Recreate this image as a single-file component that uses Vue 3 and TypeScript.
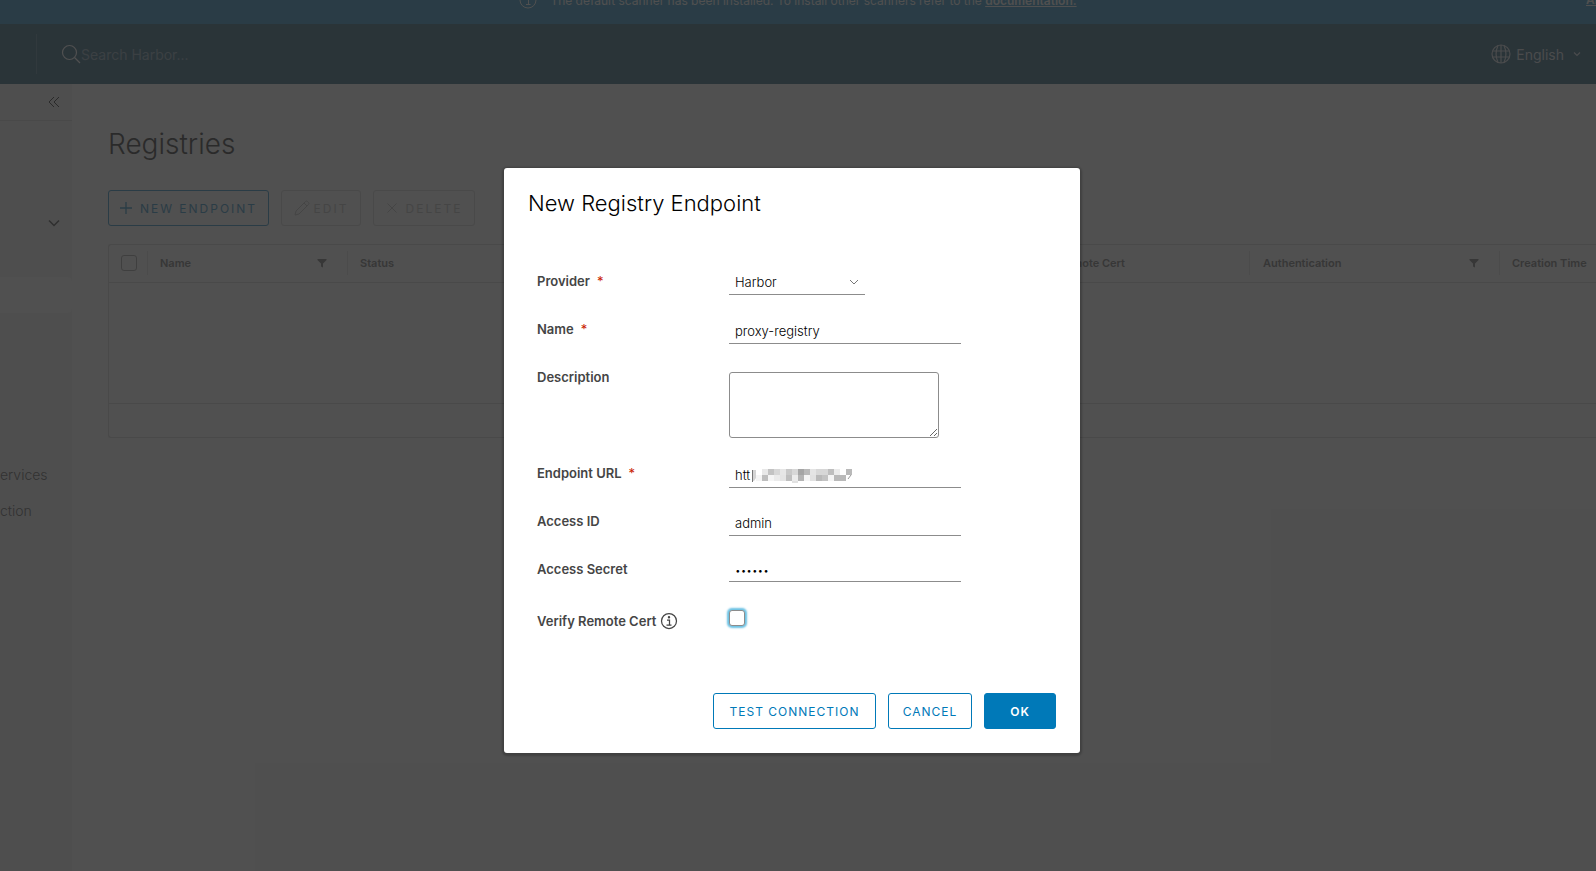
<script setup lang="ts">
import { ref } from 'vue'

const provider = ref('Harbor')
const name = ref('proxy-registry')
const description = ref('')
const endpoint = ref('htt')
const accessId = ref('admin')
const secret = ref('secret')
const verify = ref(false)
const search = ref('')

interface Column {
  label: string
  cls: string
  filter: boolean
}
const columns: Column[] = [
  { label: 'Name', cls: 'c-name', filter: true },
  { label: 'Status', cls: 'c-status', filter: false },
  { label: 'Verify Remote Cert', cls: 'c-cert', filter: false },
  { label: 'Authentication', cls: 'c-auth', filter: true },
  { label: 'Creation Time', cls: 'c-time', filter: false },
]

// Grey levels of the masked address, one row of 6px blocks after another; 255 is blank.
const mask: number[][] = [
  [255, 232, 195, 215, 230, 200, 215, 165, 185, 228, 215, 215, 190, 235, 255, 185],
  [245, 190, 245, 235, 228, 190, 235, 180, 245, 225, 185, 195, 245, 185, 185, 255],
]
</script>

<template>
  <div class="page">
    <div class="banner">
      <div class="banner-inner">
        <svg class="i18" viewBox="0 0 36 36" fill="none" stroke="currentColor" stroke-width="2">
          <circle cx="18" cy="18" r="16" />
          <path d="M14 16h5v11M14 27h9" />
          <circle cx="18" cy="10" r="1" />
        </svg>
        <span>The default scanner has been installed. To install other scanners refer to the <a href="#">documentation.</a></span>
      </div>
      <a class="all" href="#">All</a>
    </div>
    <header class="header">
      <label class="search">
        <svg class="i20" viewBox="0 0 20 20" fill="none" stroke="currentColor" stroke-width="1.2">
          <circle cx="8.500" cy="8.500" r="7" />
          <path d="M13.500 13.500L19 19" />
        </svg>
        <input v-model="search" type="search" placeholder="Search Harbor..." aria-label="Search Harbor" />
      </label>
      <button class="lang" type="button">
        <svg class="i20" viewBox="0 0 20 20" fill="none" stroke="currentColor" stroke-width="1.200">
          <circle cx="10" cy="10" r="9" />
          <path d="M10 1v18M2 7h16M2 13h16M7 1.500C4.500 7 4.500 13 7 18.500M13 1.500C15.500 7 15.500 13 13 18.500" />
        </svg>
        <span>English</span>
        <svg class="i8" viewBox="0 0 8 8" fill="none" stroke="currentColor" stroke-width="1.200"><path d="M1 2.500l3 3 3-3" /></svg>
      </button>
    </header>
    <div class="body">
      <nav class="side">
        <button class="collapse" type="button" aria-label="Collapse">
          <svg class="i12" viewBox="0 0 12 12" fill="none" stroke="currentColor"><path d="M6 1L1 6l5 5M11 1L6 6l5 5" /></svg>
        </button>
        <button class="expand" type="button" aria-label="Expand group">
          <svg class="i12" viewBox="0 0 12 12" fill="none" stroke="currentColor" stroke-width="1.500"><path d="M1 3.500l5 5 5-5" /></svg>
        </button>
        <a class="item active" href="#" aria-label="Current section"></a>
        <a class="item first" href="#">ervices</a>
        <a class="item" href="#">ction</a>
      </nav>
      <main class="main">
        <h2>Registries</h2>
        <div class="actions">
          <button class="btn new" type="button">
            <svg class="i12" viewBox="0 0 12 12" stroke="currentColor" stroke-width="1.300"><path d="M6 0v12M0 6h12" /></svg>
            NEW ENDPOINT
          </button>
          <button class="btn edit" type="button" disabled>
            <svg class="i16" viewBox="0 0 16 16" fill="none" stroke="currentColor"><path d="M1 15l1-4L11.500 1.500q1-1 2 0l1 1q1 1 0 2L5 14zM10 3l3 3" /></svg>
            EDIT
          </button>
          <button class="btn delete" type="button" disabled>
            <svg class="i12" viewBox="0 0 12 12" stroke="currentColor"><path d="M1.500 1.500l9 9M10.500 1.500l-9 9" /></svg>
            DELETE
          </button>
        </div>
        <div class="grid">
          <table>
            <thead>
              <tr>
                <th class="c-check"><input type="checkbox" class="box" aria-label="Select all" /></th>
                <th v-for="c in columns" :key="c.label" :class="c.cls">
                  <div class="cell">
                    <span>{{ c.label }}</span>
                    <button v-if="c.filter" type="button" :aria-label="'Filter ' + c.label">
                      <svg class="i10" viewBox="0 0 10 10" fill="currentColor"><path d="M.5 1h9v1L6 5.500V9.500L4 8.500v-3L.5 2z" /></svg>
                    </button>
                  </div>
                </th>
              </tr>
            </thead>
            <tbody><tr><td colspan="6"></td></tr></tbody>
            <tfoot><tr><td colspan="6"></td></tr></tfoot>
          </table>
        </div>
      </main>
    </div>

    <div class="backdrop">
      <form class="modal" role="dialog" aria-labelledby="dialog-title" @submit.prevent>
        <h3 id="dialog-title">New Registry Endpoint</h3>
        <div class="rows">
          <div class="row">
            <label for="provider">Provider <em>*</em></label>
            <div class="select">
              <select id="provider" v-model="provider"><option>Harbor</option></select>
              <svg class="i10" viewBox="0 0 10 10" fill="none" stroke="currentColor"><path d="M1 3l4 4 4-4" /></svg>
            </div>
          </div>
          <div class="row">
            <label for="name">Name <em>*</em></label>
            <input id="name" v-model="name" class="field" type="text" />
          </div>
          <div class="row">
            <label for="description">Description</label>
            <textarea id="description" v-model="description"></textarea>
          </div>
          <div class="row">
            <label for="endpoint">Endpoint URL <em>*</em></label>
            <div class="masked">
              <input id="endpoint" v-model="endpoint" class="field" type="text" />
              <svg class="mask" viewBox="0 0 100 14" aria-hidden="true">
                <path d="M.5 1v12" stroke="#777" />
                <path d="M1 1h3v8l-2 3H1z" fill="#d4d4d4" />
                <g v-for="(line, r) in mask" :key="r" shape-rendering="crispEdges">
                  <rect v-for="(v, c) in line" :key="c" :x="4 + c * 6" :y="r * 6" width="6" height="6" :fill="`rgb(${v},${v},${v})`" />
                </g>
                <rect x="40" y="12" width="6" height="2" fill="#e1e1e1" />
                <path d="M99 6l-3 4" stroke="#999" />
              </svg>
            </div>
          </div>
          <div class="row">
            <label for="access-id">Access ID</label>
            <input id="access-id" v-model="accessId" class="field" type="text" />
          </div>
          <div class="row">
            <label for="secret">Access Secret</label>
            <input id="secret" v-model="secret" class="field secret" type="password" />
          </div>
          <div class="row verify">
            <label for="verify">Verify Remote Cert
              <svg class="i18" viewBox="0 0 36 36" fill="none" stroke="currentColor" stroke-width="2.500">
                <circle cx="18" cy="18" r="15" />
                <path d="M14 16h5v10M13 26h10" />
                <circle cx="18" cy="10.500" r="1.200" />
              </svg>
            </label>
            <input id="verify" v-model="verify" type="checkbox" class="box focus" />
          </div>
        </div>
        <div class="footer">
          <button class="btn test" type="button">TEST CONNECTION</button>
          <button class="btn cancel" type="button">CANCEL</button>
          <button class="btn ok" type="submit">OK</button>
        </div>
      </form>
    </div>
  </div>
</template>

<style>
body {
  margin: 0;
}
</style>

<style scoped>
* {
  box-sizing: border-box;
}
.page {
  display: flex;
  flex-direction: column;
  min-height: 100vh;
  overflow: hidden;
  position: relative;
  background: #fafafa;
  color: #565656;
  font-family: Inter, "Liberation Sans", sans-serif;
  font-size: 13px;
}
button,
input,
select,
textarea {
  font: inherit;
  color: inherit;
  margin: 0;
}
button {
  background: none;
  border: 0;
  padding: 0;
}
svg {
  flex: none;
}
.i8 { width: 8px; height: 8px; }
.i10 { width: 10px; height: 10px; }
.i12 { width: 12px; height: 12px; }
.i16 { width: 16px; height: 16px; }
.i18 { width: 18px; height: 18px; }
.i20 { width: 20px; height: 20px; }

.banner {
  display: grid;
  grid-template-columns: 1fr auto 1fr;
  align-content: end;
  height: 24px;
  overflow: hidden;
  background: #0079b8;
  color: #fafafa;
  font-size: 12px;
}
.banner-inner {
  grid-column: 2;
  display: flex;
  align-items: center;
  gap: 13px;
  height: 48px;
  white-space: nowrap;
}
.banner a {
  color: inherit;
  font-weight: 600;
}
.all {
  justify-self: end;
  height: 48px;
  width: 10px;
  line-height: 48px;
  overflow: hidden;
}
.header {
  display: flex;
  align-items: center;
  justify-content: space-between;
  height: 60px;
  padding-left: 36px;
  padding-right: 15px;
  background: #004262;
  color: #fafafa;
  font-size: 14px;
}
.search {
  display: flex;
  align-items: center;
  height: 40px;
  padding-left: 24px;
  border-left: 1px solid #33647f;
}
.search input {
  border: 0;
  padding: 0;
  background: none;
  outline: 0;
}
.search input::placeholder {
  color: #a6b8c4;
  opacity: 0.7;
}
.lang {
  display: flex;
  align-items: center;
  gap: 5px;
  color: #d8dee2;
}
.lang .i8 {
  margin-left: 4px;
}
.body {
  display: flex;
  flex: 1;
}
.side {
  width: 72px;
  flex: none;
  background: #eee;
  display: flex;
  flex-direction: column;
}
.collapse {
  display: flex;
  align-items: center;
  justify-content: flex-end;
  height: 37px;
  padding-right: 12px;
  border-bottom: 1px solid #ccc;
  color: #000;
}
.expand {
  display: flex;
  align-items: center;
  justify-content: flex-end;
  height: 36px;
  margin-top: 84px;
  padding-right: 12px;
  color: #222;
}
.item {
  display: block;
  height: 36px;
  line-height: 36px;
  color: #333;
  text-decoration: none;
  font-size: 14px;
  font-weight: 300;
}
.active {
  margin-top: 36px;
  background: #fafafa;
  border-radius: 0 4px 4px 0;
}
.first {
  margin-top: 144px;
}
.main {
  flex: 1;
  min-width: 0;
  overflow: hidden;
  padding: 44px 0 0 36px;
}
h2 {
  margin: 0;
  font-size: 28px;
  line-height: 32px;
  font-weight: 300;
  color: #000;
}
.actions {
  display: flex;
  gap: 12px;
  margin-top: 30px;
}
.btn {
  display: flex;
  align-items: center;
  justify-content: center;
  gap: 8px;
  height: 36px;
  border: 1px solid #0079b8;
  border-radius: 3px;
  color: #0079b8;
  font-size: 12px;
  letter-spacing: 1px;
  white-space: nowrap;
}
.actions .btn {
  letter-spacing: 2px;
}
.new { width: 161px; }
.edit { width: 80px; gap: 4px; }
.delete { width: 102px; }
.btn:disabled {
  border-color: #ccc;
  color: #b4b4b4;
}
.grid {
  margin-top: 18px;
  border: 1px solid #ccc;
  border-right: 0;
  border-radius: 3px 0 0 3px;
}
table {
  width: 100%;
  table-layout: fixed;
  border-collapse: collapse;
}
th {
  height: 37px;
  padding: 0;
  border-bottom: 1px solid #ccc;
  text-align: left;
  font-size: 11px;
  font-weight: 600;
}
.c-check { width: 38px; padding-left: 12px; }
.c-name { width: 200px; }
.c-status { width: 664px; }
.c-cert { width: 238px; }
.c-auth { width: 250px; }
.cell {
  display: flex;
  align-items: center;
  justify-content: space-between;
  height: 24px;
  padding: 0 20px 0 12px;
  border-left: 1px solid #ddd;
  white-space: nowrap;
}
.c-auth .cell {
  padding-left: 13px;
}
.cell button {
  display: flex;
}
tbody td {
  height: 121px;
  background: #fff;
}
tfoot td {
  height: 34px;
  border-top: 1px solid #ccc;
}
.box {
  appearance: none;
  display: block;
  width: 16px;
  height: 16px;
  border: 1px solid #8c8c8c;
  border-radius: 3px;
  background: #fff;
}
.backdrop {
  position: absolute;
  inset: 0;
  display: flex;
  justify-content: center;
  align-items: flex-start;
  padding: 168px 12px 0 0;
  background: rgba(49, 49, 49, 0.85);
}
.modal {
  width: 576px;
  padding: 24px;
  background: #fff;
  border-radius: 3px;
  box-shadow: 0 1px 2px 2px rgba(0, 0, 0, 0.2);
}
h3 {
  margin: 0;
  font-size: 22px;
  line-height: 22px;
  font-weight: 300;
  color: #000;
}
.rows {
  display: flex;
  flex-direction: column;
  gap: 24px;
  padding: 56px 0 57px 9px;
}
.row {
  display: grid;
  grid-template-columns: 192px 1fr;
  align-items: start;
  min-height: 24px;
  color: #000;
}
.row label {
  display: flex;
  align-items: center;
  height: 22px;
  color: #454545;
  font-weight: 600;
}
.row em {
  margin-left: 7px;
  color: #c92100;
  font-style: normal;
  font-weight: 400;
}
.row:not(.verify):not(:nth-child(3)) {
  height: 24px;
}
.field,
.select select {
  font-weight: 300;
}
.field {
  width: 232px;
  height: 26px;
  padding: 0 6px;
  border: 0;
  border-bottom: 1px solid #8c8c8c;
  background: none;
  outline: 0;
}
.secret {
  height: 24px;
  font-size: 10px;
}
.select {
  display: flex;
  align-items: center;
  width: 136px;
  height: 25px;
  border-bottom: 1px solid #8c8c8c;
}
.select select {
  appearance: none;
  width: 100%;
  height: 24px;
  padding: 0 6px;
  border: 0;
  background: none;
  outline: 0;
}
.select svg {
  margin-left: -16px;
  margin-right: 6px;
  color: #777;
  pointer-events: none;
}
textarea {
  width: 210px;
  height: 66px;
  margin-top: 6px;
  border: 1px solid #8c8c8c;
  border-radius: 3px;
  outline: 0;
}
.masked {
  position: relative;
}
.mask {
  position: absolute;
  left: 23px;
  top: 7px;
  width: 100px;
  height: 14px;
}
.verify label {
  height: 30px;
  gap: 4px;
}
.verify .box {
  margin-top: 4px;
}
.focus {
  box-shadow: 0 0 2px 2px #6bc1e3;
}
.footer {
  display: flex;
  justify-content: flex-end;
  gap: 12px;
}
.test { width: 163px; }
.cancel { width: 84px; }
.ok {
  width: 72px;
  background: #0079b8;
  color: #fff;
  font-weight: 600;
}
</style>
